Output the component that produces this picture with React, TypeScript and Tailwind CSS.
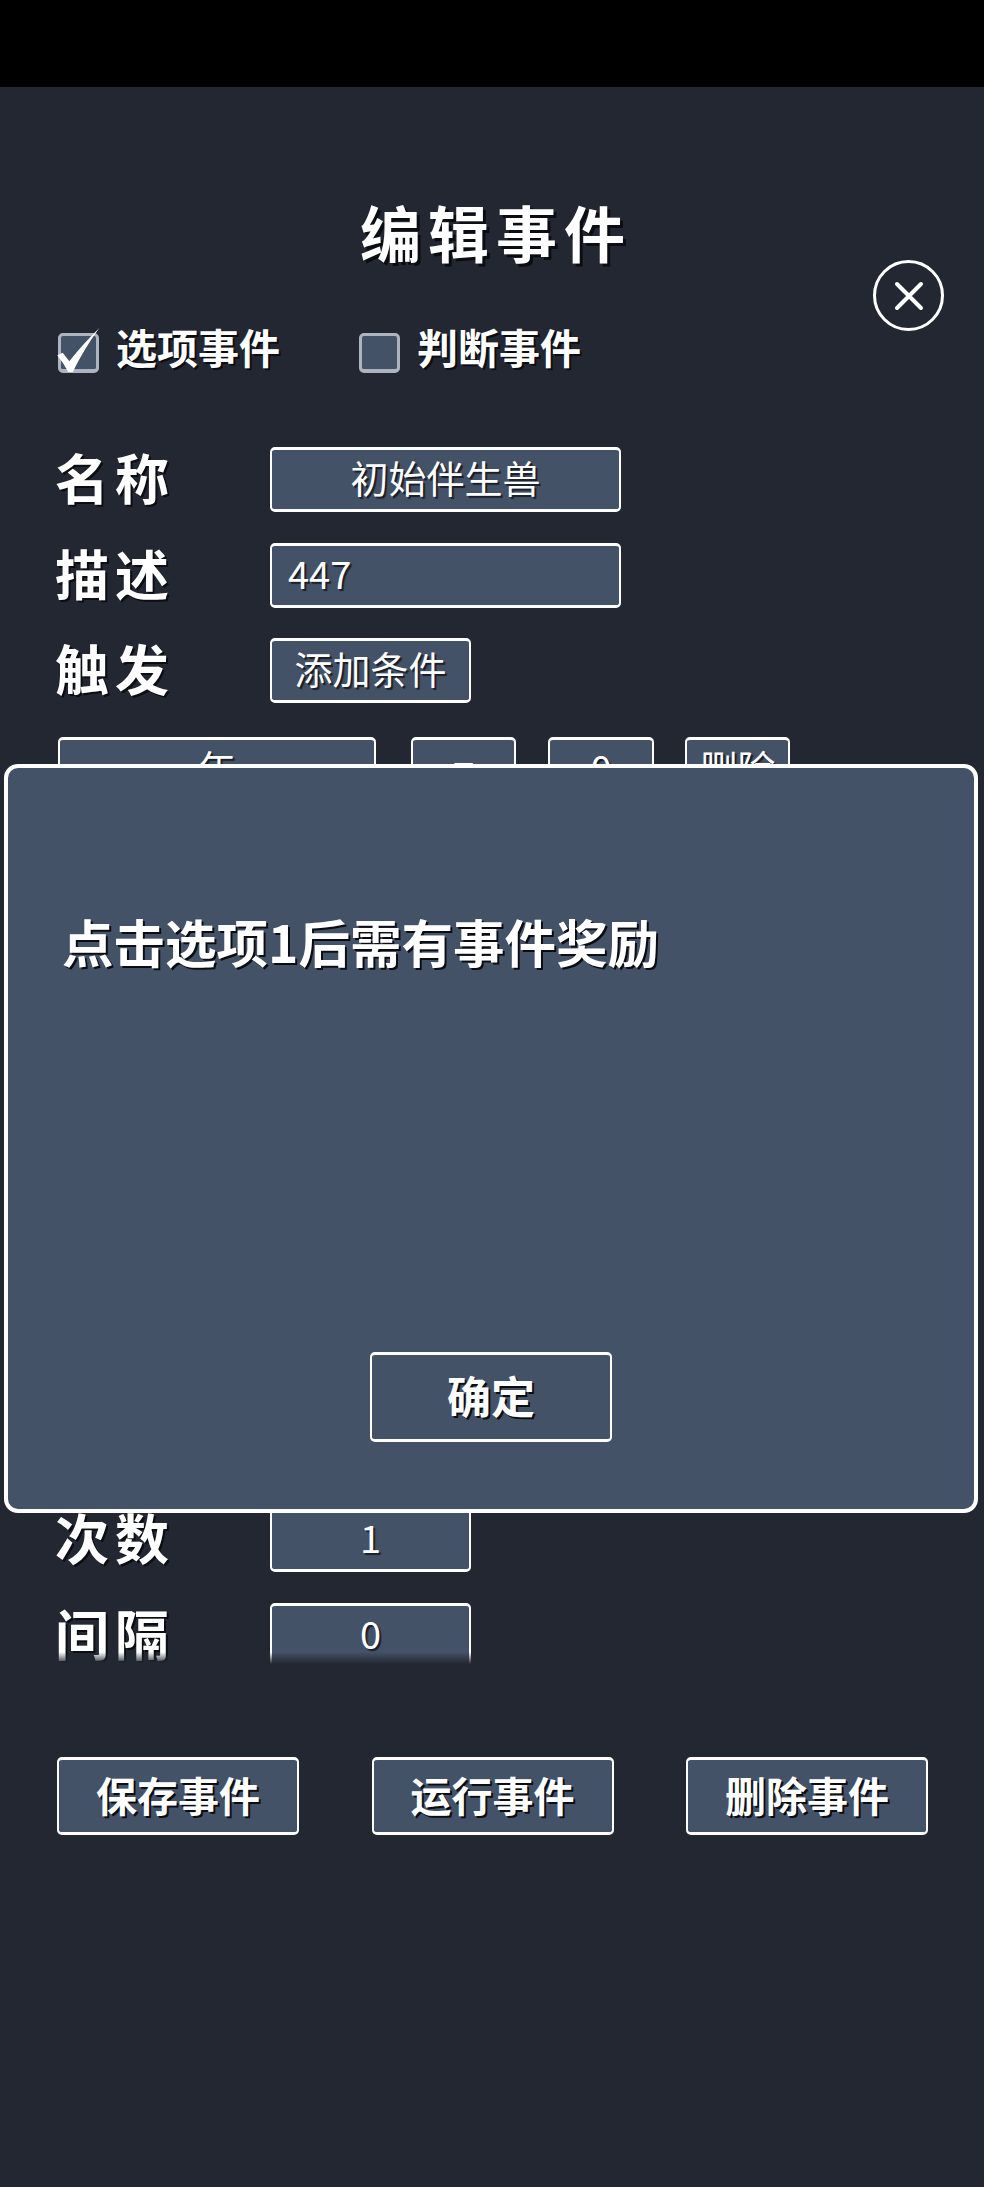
import React from "react";

const font = "font-['Noto_Sans_CJK_SC','Noto_Sans',sans-serif]";
const shadow = "[text-shadow:2px_2px_0_#0b0d12]";
const soft = "[text-shadow:2px_2px_1px_#1a1e28]";

function Box({ className = "", children }: { className?: string; children?: React.ReactNode }) {
  return (
    <div className={`flex items-center justify-center shrink-0 bg-[#445268] border-x-2 border-t-[3px] border-b-[3px] border-white rounded-[5px] text-white ${className}`}>
      {children}
    </div>
  );
}

function Row({ label, children, className = "" }: { label: string; children: React.ReactNode; className?: string }) {
  return (
    <div className={`flex items-center shrink-0 h-[65px] ${className}`}>
      <div className={`w-[213px] shrink-0 -ml-[2px] mr-[2px] pb-[5px] text-[54px] leading-[58px] font-bold tracking-[6px] text-white ${shadow}`}>{label}</div>
      {children}
    </div>
  );
}

function Field({ w, children }: { w: string; children: React.ReactNode }) {
  return <Box className={`${w} h-[65px] pb-[6px] text-[38px] leading-[48px] ${soft}`}>{children}</Box>;
}

function Check({ checked, label }: { checked?: boolean; label: string }) {
  return (
    <div className="flex items-center gap-[17px]">
      <div className="relative w-[41px] h-[40px] bg-[#445268] border-[3px] border-b-[4px] border-[#aeb4bf] rounded-[5px]">
        {checked && (
          <svg className="absolute left-[-5px] top-[-10px]" width="46" height="48" viewBox="0 0 46 48">
            <path d="M1.3 29.3 L6.7 26.7 L13.3 35.3 Q26 19 43.3 2 Q28 23 16.7 46 L12.3 46 Q8 38 1.3 29.3 Z" fill="#fff" />
          </svg>
        )}
      </div>
      <span className={`mb-[14px] text-[41px] leading-[50px] font-bold text-white ${shadow}`}>{label}</span>
    </div>
  );
}

function Action({ children }: { children: React.ReactNode }) {
  return <Box className={`w-[242px] h-[78px] pb-[4px] text-[41px] font-bold leading-[50px] ${shadow}`}>{children}</Box>;
}

export default function App() {
  return (
    <div className={`relative w-[984px] h-[2187px] overflow-hidden bg-[#232732] ${font}`}>
      <div className="h-[87px] bg-black" />

      <h1 className={`mt-[108px] ml-[8px] h-[74px] text-center text-[61px] leading-[74px] font-bold tracking-[7px] text-white [text-shadow:3px_3px_0_#0b0d12]`}>编辑事件</h1>

      <div className="mt-[59px] ml-[58px] flex items-center gap-[79px] h-[50px]">
        <Check checked label="选项事件" />
        <Check label="判断事件" />
      </div>

      <div className="relative mt-[57px] ml-[55px] pt-[12px] pl-[2px] w-[872px] h-[1241px] overflow-hidden flex flex-col">
        <Row label="名称"><Field w="w-[351px]">初始伴生兽</Field></Row>
        <Row label="描述" className="mt-[31px]"><Field w="w-[351px] !justify-start pl-[16px]">447</Field></Row>
        <Row label="触发" className="mt-[30px]"><Field w="w-[201px]">添加条件</Field></Row>
        <div className="mt-[34px] flex items-center shrink-0 h-[65px]">
          <Field w="w-[318px] ml-[1px]">年</Field>
          <Field w="w-[105px] ml-[35px]">=</Field>
          <Field w="w-[106px] ml-[32px]">0</Field>
          <Field w="w-[105px] ml-[31px]">删除</Field>
        </div>
        <Row label="次数" className="mt-[705px]"><Field w="w-[201px]">1</Field></Row>
        <Row label="间隔" className="mt-[31px]"><Field w="w-[201px]">0</Field></Row>
        <div className="absolute left-0 right-0 bottom-0 h-[24px] bg-gradient-to-b from-[#232732]/0 via-[#232732] via-50% to-[#232732]" />
      </div>

      <div className="mt-[81px] mx-[57px] flex justify-between w-[871px]">
        <Action>保存事件</Action>
        <Action>运行事件</Action>
        <Action>删除事件</Action>
      </div>

      <button className="absolute left-[873px] top-[260px] w-[71px] h-[71px] rounded-full border-[3px] border-white flex items-center justify-center">
        <svg width="32" height="32" viewBox="0 0 32 32" fill="none" stroke="#fff" strokeWidth="4" strokeLinecap="round">
          <path d="M4 4 L28 28 M28 4 L4 28" />
        </svg>
      </button>

      <div className="absolute left-[4px] top-[764px] w-[974px] h-[749px] bg-[#445268] border-[4px] border-white rounded-[14px] flex flex-col items-center">
        <p className={`self-start ml-[54px] mt-[140px] text-[51.5px] leading-[66px] font-bold text-white ${shadow}`}>点击选项1后需有事件奖励</p>
        <Box className={`mt-[378px] w-[242px] h-[90px] pb-[4px] text-[44px] leading-[56px] font-bold ${shadow}`}>确定</Box>
      </div>
    </div>
  );
}
